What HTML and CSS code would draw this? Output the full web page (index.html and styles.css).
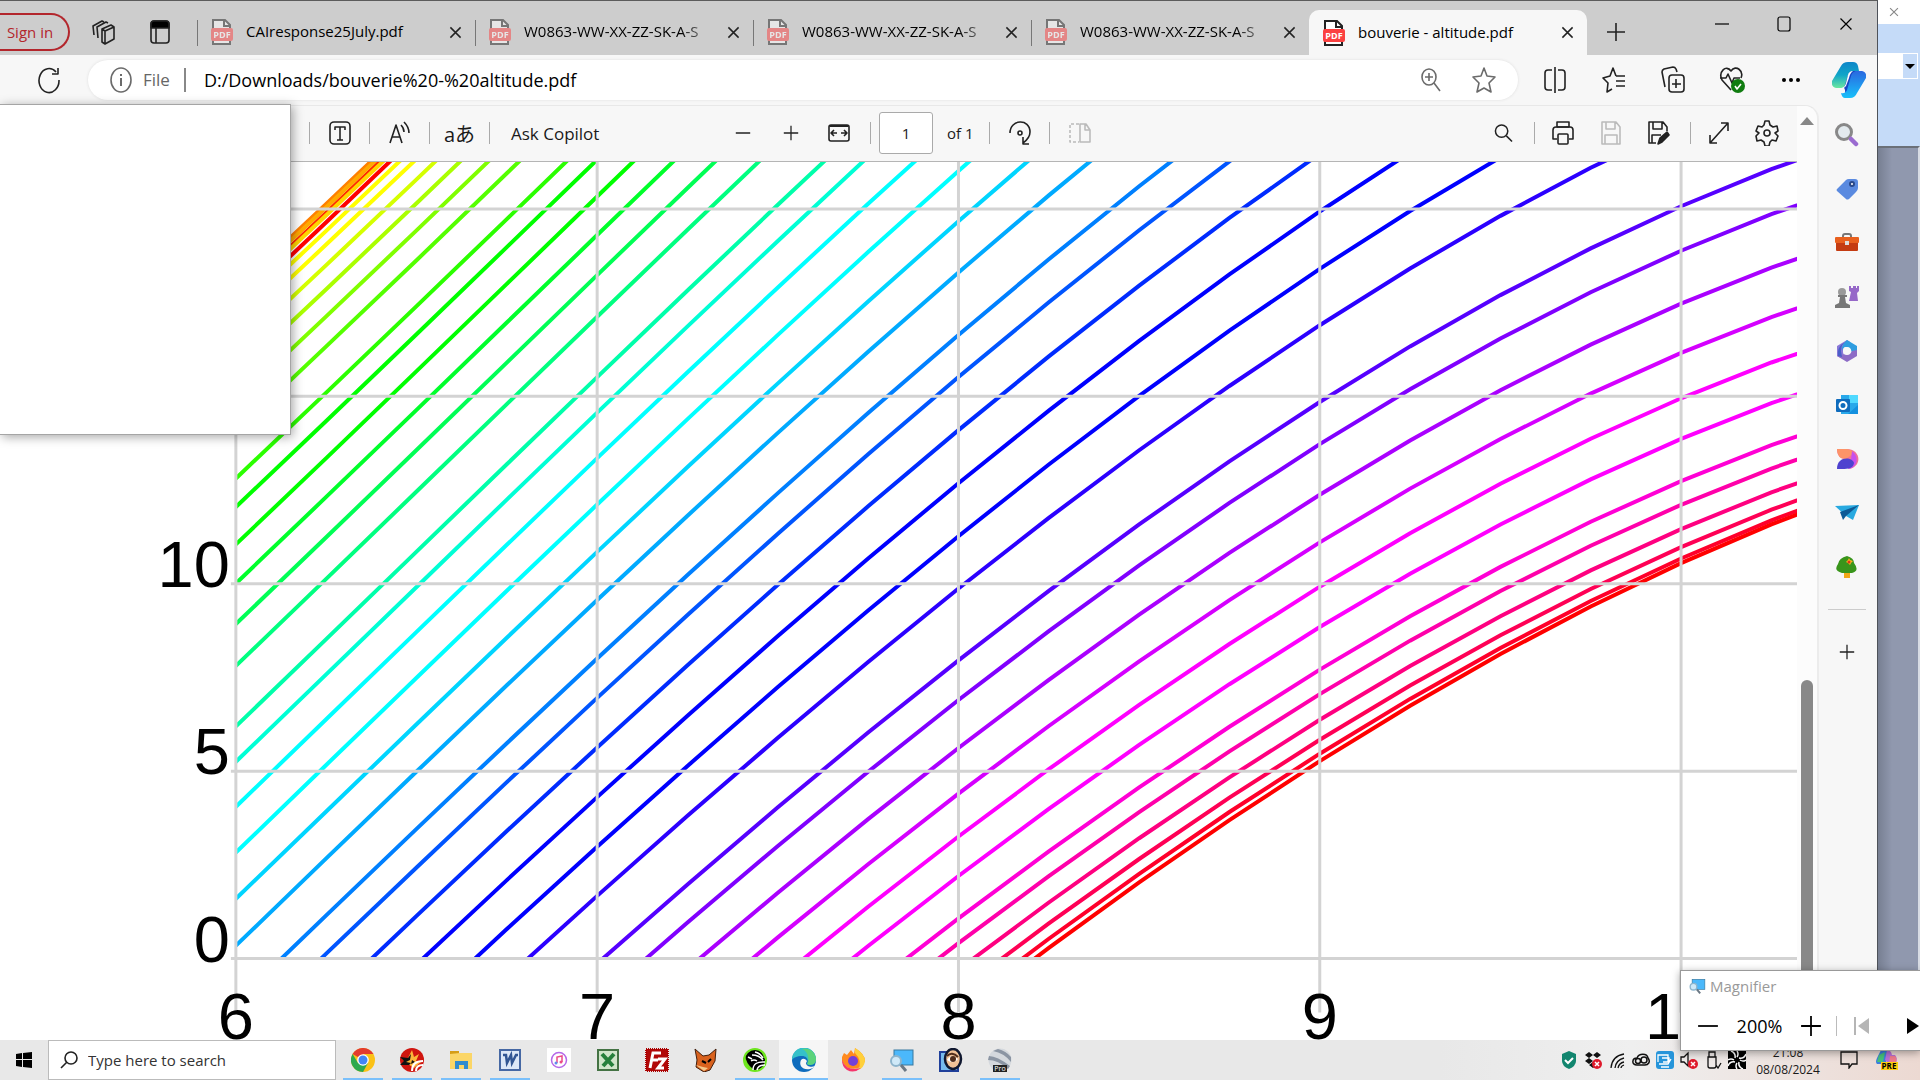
FILE: index.html
```html
<!DOCTYPE html>
<html lang="en">
<head>
<meta charset="utf-8">
<title>bouverie - altitude.pdf</title>
<link rel="stylesheet" href="styles.css">
</head>
<body>
<svg class="defs" aria-hidden="true">
  <defs>
    <symbol id="pdf" viewBox="0 0 22 26">
      <path d="M2 1h12l5 5v19H2z" fill="#fff" stroke="#222" stroke-width="2"/>
      <path d="M13 1v6h6" fill="none" stroke="#222" stroke-width="2"/>
      <rect y="9" width="22" height="13" rx="2" fill="#fb4141"/>
      <text x="11" y="19" text-anchor="middle" class="pdf-label">PDF</text>
    </symbol>
    <symbol id="close" viewBox="0 0 14 14"><path d="M1.500 1.500l11 11M12.500 1.500l-11 11"/></symbol>
    <symbol id="plus" viewBox="0 0 20 20"><path d="M10 1v18M1 10h18"/></symbol>
    <symbol id="minus" viewBox="0 0 20 20"><path d="M1 10h18"/></symbol>
    <symbol id="lens" viewBox="0 0 20 20"><circle cx="8" cy="8" r="6.500"/><path d="M13 13l6 6"/></symbol>
    <symbol id="screenlens" viewBox="0 0 24 24">
      <rect x="4" y="2" width="19" height="15" fill="#4bb8fb" stroke="#37789f"/>
      <path d="M11 17l5 6" stroke="#6b7884" stroke-width="3"/>
      <circle cx="6" cy="13" r="5" fill="#cfe9f8" stroke="#8db4cc" stroke-width="2"/>
    </symbol>
  </defs>
</svg>

<div class="desktop">
  <main class="browser">
    <header class="tabstrip">
      <button class="signin">Sign in</button>
      <div class="tab-tools">
        <button class="icon-btn" aria-label="Workspaces"><svg width="24" height="28" viewBox="0 0 24 28"><path d="M10 11l9-4 3 2v12l-9 5-3-2zM10 11l3 2v13M13 13l9-4M6 20l-1-11 9-5 2 1M2 17L1 8l9-5 2 1"/></svg></button>
        <button class="icon-btn" aria-label="Tab actions"><svg width="20" height="24" viewBox="0 0 20 24"><rect x="1" y="1" width="18" height="22" rx="3"/><path d="M1 8V4q0-3 3-3h12q3 0 3 3v4z" fill="#000"/><path d="M6 8v15"/></svg></button>
      </div>
      <nav class="tabs">
        <div class="tab"><svg class="pdf" width="22" height="26"><use href="#pdf"/></svg><span>CAIresponse25July.pdf</span><button aria-label="Close tab"><svg width="13" height="13"><use href="#close"/></svg></button></div>
        <div class="tab fade"><svg class="pdf" width="22" height="26"><use href="#pdf"/></svg><span>W0863-WW-XX-ZZ-SK-A-S</span><button aria-label="Close tab"><svg width="13" height="13"><use href="#close"/></svg></button></div>
        <div class="tab fade"><svg class="pdf" width="22" height="26"><use href="#pdf"/></svg><span>W0863-WW-XX-ZZ-SK-A-S</span><button aria-label="Close tab"><svg width="13" height="13"><use href="#close"/></svg></button></div>
        <div class="tab fade"><svg class="pdf" width="22" height="26"><use href="#pdf"/></svg><span>W0863-WW-XX-ZZ-SK-A-S</span><button aria-label="Close tab"><svg width="13" height="13"><use href="#close"/></svg></button></div>
        <div class="tab active"><svg class="pdf" width="22" height="26"><use href="#pdf"/></svg><span>bouverie - altitude.pdf</span><button aria-label="Close tab"><svg width="13" height="13"><use href="#close"/></svg></button></div>
      </nav>
      <button class="newtab" aria-label="New tab"><svg width="20" height="24"><use href="#plus"/></svg></button>
      <div class="window-btns">
        <button aria-label="Minimise"><svg width="14" height="16"><path d="M0 8h14"/></svg></button>
        <button aria-label="Maximise"><svg width="14" height="16"><rect x="1" y="1" width="12" height="14" rx="2"/></svg></button>
        <button aria-label="Close"><svg width="14" height="14"><use href="#close"/></svg></button>
      </div>
    </header>

    <div class="addressbar">
      <button class="reload" aria-label="Reload"><svg width="24" height="28" viewBox="0 0 24 28"><path d="M22 14a10 12 0 1 1-3-8M21 2v6h-6"/></svg></button>
      <div class="omnibox">
        <svg class="grey" width="22" height="28" viewBox="0 0 22 28"><ellipse cx="11" cy="14" rx="10" ry="12"/><path d="M11 12v8M11 8v2" stroke-width="2"/></svg>
        <span class="scheme">File</span>
        <input class="url" aria-label="Address" value="D:/Downloads/bouverie%20-%20altitude.pdf">
        <button class="grey" aria-label="Zoom"><svg width="20" height="24" viewBox="0 0 20 24"><ellipse cx="8" cy="9" rx="7" ry="8"/><path d="M13 15l6 8M8 5v8M4 9h8"/></svg></button>
        <button class="grey" aria-label="Favourite"><svg width="24" height="26" viewBox="0 0 24 26"><path d="M12 1l3 8 8 1-6 6 2 9-7-4-7 4 2-9-6-6 8-1z"/></svg></button>
      </div>
      <div class="actions">
        <button aria-label="Split screen"><svg width="22" height="26" viewBox="0 0 22 26"><path d="M8 3H4q-3 0-3 3v14q0 3 3 3h4M14 3h4q3 0 3 3v14q0 3-3 3h-4M11 0v26"/></svg></button>
        <button aria-label="Favourites"><svg width="24" height="26" viewBox="0 0 24 26"><path d="M14 9l-3-8-3 8-7 2 5 5-1 9 5-3M14 9h9M14 14h9M14 19h9"/></svg></button>
        <button aria-label="Collections"><svg width="24" height="28" viewBox="0 0 24 28"><rect x="8" y="9" width="15" height="17" rx="3"/><path d="M15 13v9M11 18h9M4 21L1 6q0-2 2-3l9-2q2 0 3 2l1 3"/></svg></button>
        <button aria-label="Browser essentials"><svg width="26" height="28" viewBox="0 0 26 28"><path d="M12 24L3 14C-1 6 7-2 12 5c5-7 13 0 10 7M1 12h6l2-4 4 9 2-5h6"/><circle cx="19" cy="20" r="7" fill="#107c10" stroke="none"/><path d="M16 20l2 3 4-5" stroke="#fff"/></svg></button>
        <button aria-label="More"><svg width="18" height="6" viewBox="0 0 18 6"><g fill="#000" stroke="none"><circle cx="2" cy="3" r="2"/><circle cx="9" cy="3" r="2"/><circle cx="16" cy="3" r="2"/></g></svg></button>
        <button class="copilot" aria-label="Copilot"><svg width="34" height="36" viewBox="0 0 34 36">
          <defs><linearGradient id="cp1" x2="0" y2="1"><stop stop-color="#0d86c9"/><stop offset=".5" stop-color="#10a5c8"/><stop offset="1" stop-color="#6be7a0"/></linearGradient><linearGradient id="cp2" x2="0" y2="1"><stop stop-color="#2a68e0"/><stop offset="1" stop-color="#18c0fa"/></linearGradient></defs>
          <g stroke="none"><path d="M13 28l-2-5 9-19 4 5-4 19-4 7q-3 0-3-7z" fill="#1746c4"/><path d="M9 4q2-4 7-4h5q4 0 5 4l1 5h-6q-4 0-5 4l-3 10q-1 3-4 3H4q-5-1-4-7z" fill="url(#cp1)"/><path d="M25 31q-2 5-7 5h-5q-3 0-4-5 4 1 6-3l4-14q1-4 5-5h6q5 1 4 7z" fill="url(#cp2)"/><path d="M16 13q1-4 5-4-3 2-4 7l-3 8q-1 2-4 2 3-1 4-5z" fill="#fff"/></g></svg></button>
      </div>
    </div>

    <div class="content">
      <section class="document">
        <div class="sheet">
          <div class="pdfbar">
            <button aria-label="Add text" class="boxed"><svg width="22" height="24" viewBox="0 0 22 24"><rect x="1" y="1" width="20" height="22" rx="4"/><path d="M6 9V6h10v3M11 6v13M8 19h6"/></svg></button>
            <button aria-label="Read aloud" class="boxed"><svg width="22" height="24" viewBox="0 0 22 24"><path d="M1 22L7 4l6 18M3 16h8M12 4q3 3 3 7M15 1q5 5 5 11"/></svg></button>
            <button aria-label="Translate" class="boxed translate">aあ</button>
            <button class="ask">Ask Copilot</button>
            <div class="group">
              <button aria-label="Zoom out"><svg width="16" height="18"><use href="#minus"/></svg></button>
              <button aria-label="Zoom in"><svg width="16" height="18"><use href="#plus"/></svg></button>
              <button aria-label="Fit to width"><svg width="22" height="18" viewBox="0 0 22 18"><rect x="1" y="1" width="20" height="16" rx="2"/><path d="M2 2h18" stroke-width="2"/><path d="M9 9H4m2-3L3 9l3 3M13 9h5m-2-3l3 3-3 3"/></svg></button>
            </div>
            <label class="page"><input value="1" aria-label="Page number"><span>of 1</span></label>
            <button aria-label="Rotate" class="boxed"><svg width="24" height="26" viewBox="0 0 24 26"><path d="M2 13C2-1 22-2 22 12q0 6-7 11M15 17v7h6"/><circle cx="12" cy="13" r="2"/></svg></button>
            <button aria-label="Page view" class="dim"><svg width="22" height="20" viewBox="0 0 22 20"><path d="M11 1h6l4 6v12H11zM16 1v6h5"/><path d="M10 1H1v18h9" stroke-dasharray="3 2"/></svg></button>
            <div class="right">
              <button class="find" aria-label="Find"><svg width="19" height="22"><use href="#lens"/></svg></button>
              <div class="group">
                <button aria-label="Print"><svg width="22" height="24" viewBox="0 0 22 24"><path d="M5 18H1V9q0-3 3-3h14q3 0 3 3v9h-4"/><rect x="5" y="1" width="12" height="5"/><rect x="6" y="13" width="10" height="10" rx="1"/></svg></button>
                <button aria-label="Save" class="dim"><svg width="20" height="24" viewBox="0 0 20 24"><path d="M1 1h14l4 5v17H1zM5 1v7h9V1M4 23v-9h12v9"/></svg></button>
                <button aria-label="Save as"><svg width="22" height="24" viewBox="0 0 22 24"><path d="M8 22H1V1h14l4 5v4M5 1v7h9V1M4 22v-8h9"/><path d="M10 23l2-6 7-6 2 3-7 7z" fill="#222"/></svg></button>
              </div>
              <div class="group">
                <button aria-label="Full screen"><svg width="20" height="24" viewBox="0 0 20 24"><path d="M12 2h7v8M19 2L1 22M1 14v8h7"/></svg></button>
                <button aria-label="Settings"><svg width="24" height="26" viewBox="0 0 24 26"><path d="M9 5l1-4h4l1 4 3 2 4-1 1 5-3 2 3 3-2 5-4-1-2 2-1 4h-4l-1-4-3-2-4 1-1-5 3-3-3-2 2-5 4 1z"/><circle cx="12" cy="13" r="3"/></svg></button>
              </div>
            </div>
          </div>
          <svg class="chart" id="chart" viewBox="0 161 1798 879" preserveAspectRatio="xMinYMin slice" role="img" aria-label="Sun altitude by hour"></svg>
        </div>
        <div class="scrollbar"><div class="arrow"></div><div class="thumb"></div></div>
      </section>

      <aside class="sidebar">
        <svg viewBox="0 0 24 24"><circle cx="9" cy="9" r="7.500" fill="#e3eaee" stroke="#888" stroke-width="3"/><path d="M16 16l5 5" stroke="#9a6bd0" stroke-width="4.500" stroke-linecap="round"/></svg>
        <svg viewBox="0 0 24 24"><path d="M2 12L11 3q1-1 3-1h6q3 0 3 3v6q0 2-2 4l-7 7q-2 1-3 0l-9-8q-1-1 0-2z" fill="#5a8ae0"/><circle cx="17" cy="7" r="2" fill="#fff" stroke="#29498a" stroke-width="2"/></svg>
        <svg viewBox="0 0 24 24"><path d="M8 7V5q0-2 2-2h4q2 0 2 2v2" fill="none" stroke="#777" stroke-width="2"/><rect x="1" y="9" width="22" height="11" rx="1" fill="#c43c12"/><rect y="6" width="24" height="6" rx="1" fill="#e8601e"/><rect x="10" y="10" width="4" height="4" fill="#ddd"/></svg>
        <svg viewBox="0 0 24 24"><path d="M14 1h2v2h2V1h3v2h1V1h2v5l-2 2 1 8H14l2-9-2-1z" fill="#9668c8"/><circle cx="7" cy="7" r="4" fill="#999"/><path d="M3 10h9v2H10l1 6 4 2v3H0v-3l4-2 1-6H3z" fill="#777"/></svg>
        <svg viewBox="0 0 24 24"><path d="M2 7l10-6 3 2q-7 3-7 9l1 5-3 2-4-2z" fill="#8a78d8"/><path d="M12 1l10 6v9l-5-1q0-6-6-7-3 0-4 4-1-6 5-11z" fill="#2f9de0"/><path d="M2 17l8-2q5 1 7-3l5-1v6l-10 6z" fill="#8d6cc6"/><path d="M6 12q0-8 7-10L7 5q-5 4-4 12l4 1z" fill="#4a5fc8"/><circle cx="12" cy="12" r="4" fill="#f7f7f7"/></svg>
        <svg viewBox="0 0 24 24"><rect x="6" y="2" width="17" height="19" fill="#28a8ea"/><path d="M14 2h9v8h-9z" fill="#50d9ff"/><path d="M13 21l10-9v9z" fill="#1490df"/><rect x="1" y="6" width="14" height="13" rx="1" fill="#0f6cbd"/><circle cx="8" cy="12.500" r="3.500" fill="none" stroke="#fff" stroke-width="2"/></svg>
        <svg viewBox="0 0 24 24"><path d="M2 2h9c16 0 16 18 3 20 3-6-2-10-8-11-3-2-4-5-4-9z" fill="#f0709a"/><path d="M2 2h9q5 0 8 4l-8 6q-9 0-9-10z" fill="#fd9468"/><path d="M17 4c8 6 5 17-4 18l3-9z" fill="#c750ee"/><path d="M2 22c0-14 16-12 17-6-1 7-9 6-17 6z" fill="#4e42cf"/></svg>
        <svg viewBox="0 0 24 24"><path d="M0 5l24-1-6 15-7-4z" fill="#28a9e0"/><path d="M5 11L24 4 11 15l-3 4z" fill="#0c5a96"/></svg>
        <svg viewBox="0 0 24 24"><rect x="9" y="15" width="6" height="8" fill="#f0a818"/><path d="M12 1q7 2 7 7 6 8-2 10H7q-9-2-4-9 1-6 9-8z" fill="#39951b"/><path d="M14 3l1 2 3 1-2 2-1 2-2-2-2-1 2-2z" fill="#ffb321"/><circle cx="14" cy="7" r="1.500" fill="#dc3518"/></svg>
        <hr>
        <button aria-label="Customise sidebar"><svg width="16" height="18"><use href="#plus"/></svg></button>
      </aside>
    </div>
  </main>

  <div class="behind">
    <div class="behind-title"><svg width="10" height="12"><use href="#close"/></svg></div>
    <div class="behind-bar"><div class="combo"><span></span></div></div>
    <div class="behind-body"></div>
  </div>
</div>

<footer class="taskbar">
  <button class="start" aria-label="Start"><svg width="18" height="16" viewBox="0 0 18 16"><path d="M1 2l6-1v6H1zM8 1l9-1v7H8zM1 8h6v7l-6-1zM8 8h9v8l-9-1z" fill="#000"/></svg></button>
  <label class="search"><svg width="18" height="18" viewBox="0 0 18 18"><circle cx="11" cy="7" r="6"/><path d="M7 11l-6 6"/></svg><input placeholder="Type here to search" aria-label="Search"></label>
  <div class="apps">
    <button class="open" aria-label="Chrome"><svg viewBox="0 0 24 24"><circle cx="12" cy="12" r="12" fill="#fbc116"/><path d="M12 12L1.600 6A12 12 0 0 1 22.400 6H12z" fill="#e33b2e"/><path d="M12 12l5 3-5 9A12 12 0 0 1 1.600 6L7 15z" fill="#2da94f"/><circle cx="12" cy="12" r="5.800" fill="#fff"/><circle cx="12" cy="12" r="4.500" fill="#4285f4"/></svg></button>
    <button class="open" aria-label="Radio"><svg viewBox="0 0 24 24"><circle cx="12" cy="12" r="12" fill="#d0150f"/><path d="M2 11l6-1 4-8 2 7 5-3-3 7 5 1-7 6-6-4-5-1 2-2z" fill="#fcb73a"/><path d="M0 9l8 1 3-4-1 6-4 2 5 1-2 2-9 0 4-4zM12 12l3 2-4 2z" fill="#111"/><path d="M12 23q0-10 11-10M16 23q0-6 7-6" fill="none" stroke="#fff" stroke-width="2"/></svg></button>
    <button class="open" aria-label="File Explorer"><svg viewBox="0 0 24 24"><path d="M1 3h9v3H1z" fill="#d69e16"/><path d="M1 6l10-1h12v16H1z" fill="#fbd667"/><path d="M6 21v-8h13v8h-4v-4h-5v4z" fill="#318ccf"/></svg></button>
    <button class="open" aria-label="Word"><svg viewBox="0 0 24 24"><rect x="2" y="2" width="20" height="20" fill="#dce8f8" stroke="#4668a4" stroke-width="2"/><path d="M5 7h3l1 8 4-8 1 8 4-8h2" fill="none" stroke="#315694" stroke-width="2.500"/></svg></button>
    <button aria-label="iTunes"><svg viewBox="0 0 24 24"><path d="M0 0h24v24H0z" fill="#fff"/><circle cx="12" cy="12" r="7.500" fill="none" stroke="#b568e8" stroke-width="1.500"/><path d="M10 15V9l5-1v6" fill="none" stroke="#ec4a88" stroke-width="1.500"/><circle cx="9" cy="15" r="1.500" fill="#5d8ef0"/><circle cx="14" cy="14" r="1.500" fill="#ec4a88"/></svg></button>
    <button aria-label="Excel"><svg viewBox="0 0 24 24"><rect x="2" y="2" width="20" height="20" fill="#cfe5c9" stroke="#447344" stroke-width="2"/><path d="M6 6l11 12M18 6L7 18" stroke="#25803a" stroke-width="4"/></svg></button>
    <button aria-label="FileZilla"><svg viewBox="0 0 24 24"><path d="M1 1h22v22H1z" fill="#b10808" stroke="#a00" stroke-dasharray="1 1" stroke-width="2"/><path d="M5 20L8 5h8M7 12h6M13 11h7l-7 9h6" fill="none" stroke="#fff" stroke-width="3"/></svg></button>
    <button aria-label="Fox"><svg viewBox="0 0 24 24"><path d="M1 1l8 7 6-1 7-6-1 12-5 9-6 2-8-5 1-7z" fill="#d9621e" stroke="#42200e"/><path d="M2 17l7 2 5 1-4 3z" fill="#f3c78a"/><path d="M8 13l4 2M17 11l-3 3" stroke="#000" stroke-width="2"/></svg></button>
    <button class="open" aria-label="Zebra"><svg viewBox="0 0 24 24"><circle cx="12" cy="12" r="11" fill="#000" stroke="#6ee61e" stroke-width="2"/><path d="M2 7Q-2 16 8 23l2-2Q3 16 2 7zM16 1q6 3 7 10l-2-1q-1-5-5-9z" fill="#6ee61e"/><path d="M10 22q0-9 12-8M14 22q1-5 8-5M9 7q7 0 11 5M12 4q5 1 8 6M5 9l4 2M8 13q3-2 6 0" fill="none" stroke="#fff" stroke-width="1.500"/></svg></button>
    <button class="open current" aria-label="Edge"><svg viewBox="0 0 24 24"><circle cx="12" cy="12" r="12" fill="#0f6cbd"/><path d="M0 12A12 12 0 0 1 24 11c0 6-6 7-9 5 2-4 0-8-5-8-5 0-9 2-10 4z" fill="#35c1c9"/><path d="M10 1c9-2 14 5 14 10 0 6-6 7-9 5 3-4 1-13-5-15z" fill="#5bd37b"/><path d="M9 12c-3 6 3 12 12 8l2-2c-4 2-9 0-9-3l1-2q-3-4-6-1z" fill="#f5f5f5"/></svg></button>
    <button aria-label="Firefox"><svg viewBox="0 0 24 24"><path d="M1 9l2-4 3 2 4-5 3 4 1-6q10 6 10 13a12 11 0 0 1-23 0z" fill="#ff8a1e"/><path d="M14 0q10 6 10 13-1 7-7 9 5-9-3-17z" fill="#ffd03b"/><path d="M1 12q3 9 13 9l6-1q-7 6-14 2-5-3-5-10z" fill="#f5366c"/><circle cx="12" cy="13" r="5" fill="#7440d8"/></svg></button>
    <button class="open" aria-label="Magnifier"><svg><use href="#screenlens"/></svg></button>
    <button aria-label="Image viewer"><svg viewBox="0 0 24 24"><path d="M1 4h18v19H1z" fill="#77bbed" stroke="#20409b" stroke-width="2"/><ellipse cx="14" cy="11" rx="8" ry="10" fill="#f0c196" stroke="#101830" stroke-width="2.500"/><path d="M8 12q4-7 11-1-4 6-11 1z" fill="#fff"/><circle cx="14" cy="11" r="3" fill="#502d1c"/><path d="M8 8q5-5 11 1" fill="none" stroke="#502d1c" stroke-width="2"/></svg></button>
    <button class="open" aria-label="Google Earth Pro"><svg viewBox="0 0 24 24"><circle cx="12" cy="12" r="11.500" fill="#d4d8dd"/><path d="M1 8q8 0 21 10l-2 3Q10 12 0 12zM5 3q11 2 18 11V9q-5-6-13-8z" fill="#8b95a3"/><rect x="5" y="17" width="14" height="7" fill="#222"/><text x="12" y="23" text-anchor="middle" class="pro-label">Pro</text></svg></button>
  </div>
  <div class="tray">
    <svg viewBox="0 0 18 18"><path d="M9 0l7 3v7q0 5-7 8-7-3-7-8V3z" fill="#12866f"/><path d="M5 9l3 3 5-5" fill="none" stroke="#fff" stroke-width="2"/></svg>
    <svg viewBox="0 0 18 18"><path d="M5 1l4 3-4 3-4-3zM13 1l4 3-4 3-4-3zM5 7l4 3-4 3-4-3zM9 11l4 3-4 3-4-3z" fill="#111"/><circle cx="13" cy="13" r="5" fill="#df1a2b"/><path d="M11 11l4 4M15 11l-4 4" stroke="#fff" stroke-width="1.500"/></svg>
    <svg viewBox="0 0 18 18"><path d="M3 17Q4 5 16 3M7 17q1-8 9-10M10 17q1-5 6-6M13 17q0-2 3-3" fill="none" stroke="#111" stroke-width="1.300"/></svg>
    <svg viewBox="0 0 18 18"><path d="M5 14C-1 14 0 7 5 7c2-5 10-5 11 0 3 4 0 7-3 7z" fill="none" stroke="#111" stroke-width="1.500"/><circle cx="6" cy="10" r="2.500" fill="none" stroke="#111" stroke-width="1.500"/><circle cx="12" cy="9" r="3" fill="none" stroke="#111" stroke-width="1.500"/></svg>
    <svg viewBox="0 0 18 18"><rect width="18" height="18" rx="3" fill="#2795da"/><path d="M2 11V4h10v7M6 7h7v4H7M3 13h9l3-5M5 16h8" fill="none" stroke="#fff" stroke-width="1.300"/></svg>
    <svg viewBox="0 0 18 18"><path d="M1 6h3l4-4v13l-4-4H1z" fill="none" stroke="#111" stroke-width="1.300"/><circle cx="13" cy="13" r="5" fill="#df1a2b"/><path d="M11 11l4 4M15 11l-4 4" stroke="#fff" stroke-width="1.500"/></svg>
    <svg viewBox="0 0 18 18"><path d="M5 6V1h6v5M4 6h8v9q0 2-2 2H6q-2 0-2-2zM12 14l2 3 3-5" fill="none" stroke="#111" stroke-width="1.300"/></svg>
    <svg viewBox="0 0 18 18"><path d="M0 0h18v18H0z" fill="#000"/><g fill="none" stroke="#fff" stroke-width="1.500"><path d="M3 0q5 2 4 7M9 0q2 3 0 6M18 3q-2 5-7 4M18 9q-3 2-6 0M15 18q-5-2-4-7M9 18q-2-3 0-6M0 15q2-5 7-4M0 9q3-2 6 0"/></g></svg>
    <time>21:08<br>08/08/2024</time>
    <svg class="note" viewBox="0 0 18 18"><path d="M1 1h16v12h-5l-3 4v-4H1z" fill="none" stroke="#111" stroke-width="1.300"/></svg>
    <svg class="pre" viewBox="0 0 22 20"><path d="M5 0h6l2 5-4 9H1q-2-2 0-6z" fill="#3b7fe0"/><path d="M3 5l6-3-2 10H1z" fill="#47c27b"/><path d="M11 0q4 0 5 5h3q3 3 1 8h-8l-3-3z" fill="#b86fd8"/><path d="M14 6h5q3 3 0 7h-6z" fill="#ee7c8c"/><rect x="5" y="12" width="17" height="8" fill="#ffcf12"/><text x="13" y="19" text-anchor="middle" class="pre-label">PRE</text></svg>
  </div>
</footer>

<div class="blank-popup"></div>

<div class="magnifier">
  <div class="mag-title"><svg width="17" height="16"><use href="#screenlens"/></svg><span>Magnifier</span></div>
  <div class="mag-row">
    <button aria-label="Zoom out"><svg width="22" height="22"><use href="#minus"/></svg></button>
    <output>200%</output>
    <button aria-label="Zoom in"><svg width="22" height="22"><use href="#plus"/></svg></button>
    <i></i>
    <button aria-label="Previous"><svg width="16" height="18"><path d="M1 0h2v18H1zM16 1v16L5 9z" fill="#b5b5b5" stroke="none"/></svg></button>
    <button aria-label="Play" class="play"><svg width="12" height="18"><path d="M0 1l12 8-12 8z" fill="#000" stroke="none"/></svg></button>
  </div>
</div>
<script src="chart.js"></script>
</body>
</html>
```
FILE: styles.css
```css
* { box-sizing: border-box; }
html, body { height: 100%; }
body {
  margin: 0;
  display: flex;
  flex-direction: column;
  position: relative;
  overflow: hidden;
  font-family: "Open Sans", "Noto Sans", sans-serif;
  font-size: 15px;
  color: #1a1a1a;
  background: #fff;
}
button, input { font: inherit; color: inherit; background: none; border: 0; padding: 0; margin: 0; min-width: 0; outline: 0; }
button { display: flex; align-items: center; justify-content: center; flex: none; }
svg { flex: none; display: block; }
.defs { position: absolute; width: 0; height: 0; }
.pdf-label { font-size: 9px; font-weight: 700; fill: #fff; stroke: none; }
.pro-label { font-size: 7px; fill: #fff; }
.pre-label { font-size: 8px; font-weight: 700; fill: #000; }
.browser button svg, .omnibox svg, .search svg, .behind svg, .magnifier button svg {
  fill: none; stroke: #222; stroke-width: 1.6; stroke-linejoin: round;
}

.desktop { flex: 1; min-height: 0; display: flex; }
.browser {
  flex: 1; min-width: 0; display: flex; flex-direction: column;
  background: #f7f7f7; border-top: 1px solid #5c5c5c; border-right: 1px solid #4e5259;
}

/* Tab strip */
.tabstrip { height: 54px; flex: none; display: flex; align-items: center; background: #cdcdcd; padding-bottom: 0; }
.signin { width: 70px; height: 38px; margin-top: 8px; border: 2px solid #b3262c; border-left: 0; border-radius: 0 19px 19px 0; color: #b3262c; font-size: 15px; padding-right: 8px; }
.tab-tools { display: flex; width: 127px; padding-left: 6px; margin-top: 8px; }
.tab-tools .icon-btn { width: 56px; height: 40px; }
.tabs { display: flex; align-self: stretch; flex: 1; max-width: 1390px; }
.tab { flex: 1; min-width: 0; display: flex; align-items: center; gap: 13px; padding: 8px 13px 0 14px; position: relative; }
.tab::before { content: ""; position: absolute; left: 0; top: 19px; height: 26px; width: 1px; background: #777; }
.tab .pdf { opacity: .5; }
.tab span { flex: 1; min-width: 0; white-space: nowrap; color: #000; padding-bottom: 2px; }
.tab.fade span { -webkit-mask-image: linear-gradient(90deg, #000 82%, transparent 104%); mask-image: linear-gradient(90deg, #000 82%, transparent 104%); }
.tab.active { background: #f7f7f7; border-radius: 10px 10px 0 0; margin-top: 9px; padding-top: 0; }
.tab.active::before { display: none; }
.tab.active .pdf { opacity: 1; }
.newtab { width: 58px; height: 40px; margin-top: 8px; }
.window-btns { margin-left: auto; display: flex; align-self: flex-start; }
.window-btns button { width: 62px; height: 46px; }
.browser .window-btns svg { stroke-width: 1.2; stroke: #000; }

/* Address bar */
.addressbar { height: 50px; flex: none; display: flex; align-items: center; }
.reload { width: 88px; padding-left: 10px; height: 40px; }
.omnibox { flex: 1; min-width: 0; height: 40px; border-radius: 20px; background: #fff; display: flex; align-items: center; padding: 0 22px; box-shadow: 0 0 3px #ddd; }
.browser .grey, .browser .grey svg { stroke: #6b6b6b; }
.scheme { color: #666; font-size: 17px; padding: 0 14px 0 11px; border-right: 2px solid #888; line-height: 24px; }
.url { flex: 1; font-size: 18px; padding-left: 18px; color: #000; height: 36px; }
.omnibox button { width: 24px; margin-left: 29px; }
.actions { display: flex; padding-left: 7px; }
.actions button { width: 59px; height: 40px; }
.actions .copilot { width: 57px; }

/* Document area */
.content { flex: 1; min-height: 0; display: flex; }
.document { flex: 1; min-width: 0; display: flex; border-top: 1px solid #e8e8e8; border-right: 2px solid #ececec; border-radius: 0 14px 0 0; overflow: hidden; }
.sheet { flex: 1; min-width: 0; display: flex; flex-direction: column; }
.pdfbar { height: 56px; flex: none; display: flex; align-items: center; background: #f7f7f7; border-bottom: 1px solid #b5b5b5; padding: 0 6px 1px 309px; }
.pdfbar .boxed { width: 60px; height: 22px; border-left: 1px solid #aaa; }
.translate { font-size: 20px; font-family: "Open Sans", "Noto Sans CJK JP", sans-serif; }
.ask { font-size: 17px; border-left: 1px solid #aaa; height: 22px; padding-left: 21px; width: 216px; justify-content: flex-start; margin-right: 14px; }
.group { display: flex; }
.group button { width: 48px; height: 40px; }
.page { display: flex; align-items: center; height: 22px; border-left: 1px solid #aaa; padding-left: 8px; margin-left: 7px; width: 119px; gap: 14px; }
.page input { width: 54px; height: 42px; background: #fff; border: 1px solid #aaa; border-radius: 3px; text-align: center; }
.pdfbar .dim { width: 60px; height: 22px; border-left: 1px solid #aaa; }
.pdfbar .group .dim { width: 48px; height: 40px; border: 0; }
.browser .dim svg { stroke: #bbb; }
.right { margin-left: auto; display: flex; align-items: center; }
.find { width: 60px; height: 40px; margin-right: 1px; }
.right .group { padding: 0 7px 0 5px; position: relative; }
.right .group:last-child { padding-right: 0; }
.right .group::before { content: ""; position: absolute; left: 0; top: 9px; width: 1px; height: 22px; background: #aaa; }
.chart { flex: 1; min-height: 0; width: 100%; background: #fff; }
.chart text { font-family: "Liberation Sans", Arial, sans-serif; font-size: 65px; fill: #000; }
.scrollbar { width: 20px; flex: none; background: #fcfcfc; display: flex; flex-direction: column; align-items: center; padding-top: 11px; }
.arrow { border: 7px solid transparent; border-top: 0; border-bottom: 8px solid #888; }
.thumb { width: 12px; flex: none; height: 39%; margin-top: auto; border-radius: 6px 6px 0 0; background: #888; }

.sidebar { width: 58px; flex: none; display: flex; flex-direction: column; align-items: center; gap: 30px; padding: 18px 2px 0 0; }
.sidebar > svg { width: 24px; height: 24px; }
.sidebar hr { width: 38px; margin: 0; border: 0; border-top: 1px solid #ccc; }
.sidebar button { height: 24px; }

/* Window behind the browser */
.behind { width: 42px; flex: none; display: flex; flex-direction: column; background: #c5dbf8; }
.behind-title { height: 24px; background: #fff; display: flex; justify-content: center; align-items: center; padding-right: 10px; }
.behind .behind-title svg { stroke: #888; }
.behind-bar { height: 122px; padding: 29px 2px 0 0; }
.combo { height: 26px; background: #fff; border: 1px solid #fff; display: flex; justify-content: flex-end; }
.combo span { width: 14px; background: #c5dbf8; display: flex; align-items: center; justify-content: center; }
.combo span::before { content: ""; border: 5px solid transparent; border-top-color: #000; border-bottom: 0; }
.behind-body { flex: 1; background: linear-gradient(90deg, #777f92, #9098ae 14px); border-top: 2px solid #6b7078; border-right: 2px solid #d8dce4; }

/* Taskbar */
.taskbar { height: 40px; flex: none; display: flex; background: linear-gradient(90deg, #e8e8e8 75%, #efefef 85%, #ecd9d2); }
.start { width: 48px; }
.search { width: 288px; display: flex; align-items: center; gap: 10px; padding-left: 11px; background: #fff; border: 1px solid #bbb; }
.search input { flex: 1; }
.search input::placeholder { color: #333; opacity: 1; }
.apps { display: flex; padding-left: 2px; flex: 1; min-width: 0; }
.apps button { width: 49px; position: relative; }
.apps svg { width: 24px; height: 24px; }
.apps .open::after { content: ""; position: absolute; left: 5px; right: 4px; bottom: 0; height: 2px; background: #7ac0fb; }
.apps .current { background: #f6f6f6; }
.apps .current::after { left: 0; right: 0; }
.tray { display: flex; align-items: center; gap: 6px; padding-right: 22px; font-size: 12px; }
.tray svg { width: 18px; height: 18px; }
.tray time { width: 72px; text-align: center; line-height: 17px; padding-top: 2px; white-space: nowrap; }
.tray .note { margin: 0 12px 0 10px; }
.tray .pre { width: 22px; height: 20px; }

/* Floating windows */
.blank-popup { position: absolute; left: 0; top: 104px; width: 291px; height: 331px; background: #fff; border: 1px solid #a5a5a5; border-left: 0; box-shadow: 2px 2px 10px rgba(0, 0, 0, .35); }
.magnifier { position: absolute; right: 0; bottom: 29px; width: 240px; height: 81px; background: #fff; border: 1px solid #999; border-right: 0; box-shadow: 0 2px 8px rgba(0, 0, 0, .35); padding: 4px 0 0 8px; overflow: hidden; }
.mag-title { display: flex; align-items: center; gap: 4px; color: #999; line-height: 22px; }
.mag-row { display: flex; align-items: center; height: 50px; font-size: 18px; color: #000; padding: 7px 1px 0 8px; }
.mag-row output { width: 81px; text-align: center; }
.mag-row i { width: 1px; height: 20px; background: #bbb; margin: 0 16px 0 14px; }
.magnifier button svg { stroke: #000; }
.mag-row .play { margin-left: auto; }
```
FILE: chart.js
```js
// Sun altitude through the morning, one curve per date, June to December.
const LAT = 51.51, LON = -0.17, RAD = Math.PI / 180;
const X6 = 236, HOUR = 361.5, Y0 = 958, DEG = 37.5;
const COLOURS = [
  '#ff0000', '#ff2b00', '#ff5500', '#ff8000', '#ffaa00', '#ffd500',
  '#ffff00', '#ffff00', '#d5ff00', '#aaff00', '#80ff00', '#55ff00',
  '#2bff00', '#00ff00', '#00ff00', '#00ff2b', '#00ff55', '#00ff80',
  '#00ffaa', '#00ffd5', '#00ffff', '#00ffff', '#00d5ff', '#00aaff',
  '#0080ff', '#0055ff', '#002bff', '#0000ff', '#0000ff', '#2b00ff',
  '#5500ff', '#8000ff', '#aa00ff', '#d500ff', '#ff00ff', '#ff00ff',
  '#ff00d5', '#ff00aa', '#ff0080', '#ff0055', '#ff002b', '#ff0000'
];
const DAYS = [1, 5, 10, 15, 20, 25];

function sun(month, day) {
  const n = (Date.UTC(2024, month, day, 9) - Date.UTC(2000, 0, 1, 12)) / 864e5;
  const L = 280.46 + 0.9856474 * n;
  const g = (357.528 + 0.9856003 * n) * RAD;
  const lambda = (L + 1.915 * Math.sin(g) + 0.02 * Math.sin(2 * g)) * RAD;
  const eps = 23.437 * RAD;
  const ra = Math.atan2(Math.cos(eps) * Math.sin(lambda), Math.cos(lambda)) / RAD;
  const eot = ((L - ra) % 360 + 540) % 360 - 180;
  return { dec: Math.asin(Math.sin(eps) * Math.sin(lambda)), eot };
}

function altitude(s, hour) {
  const h = ((hour - 12) * 15 + s.eot + LON) * RAD;
  return Math.asin(Math.sin(LAT * RAD) * Math.sin(s.dec) +
    Math.cos(LAT * RAD) * Math.cos(s.dec) * Math.cos(h)) / RAD;
}

let out = '<clipPath id="plot"><path d="M236 100H1798V958H236z"/></clipPath><g clip-path="url(#plot)" fill="none" stroke-width="4">';
COLOURS.forEach((colour, i) => {
  const s = sun(5 + Math.floor(i / 6), DAYS[i % 6]);
  const points = [];
  for (let hour = 5; hour <= 10.5; hour += 0.25) {
    points.push((X6 + (hour - 6) * HOUR).toFixed(1) + ',' + (Y0 - altitude(s, hour) * DEG).toFixed(1));
  }
  out += `<polyline stroke="${colour}" points="${points.join(' ')}"/>`;
});
out += '</g><g stroke="#d3d3d3" stroke-width="3">';
for (let a = 0; a <= 20; a += 5) out += `<path d="M231 ${Y0 - a * DEG}H1798"/>`;
for (let h = 0; h <= 4; h++) out += `<path d="M${X6 + h * HOUR} 161V1012"/>`;
out += '</g>';
[0, 5, 10].forEach(a => { out += `<text x="230" y="${Y0 + 3 - a * DEG}" text-anchor="end">${a}</text>`; });
for (let h = 0; h <= 4; h++) out += `<text x="${X6 + h * HOUR}" y="1038" text-anchor="middle">${6 + h}</text>`;
document.getElementById('chart').innerHTML = out;
```
